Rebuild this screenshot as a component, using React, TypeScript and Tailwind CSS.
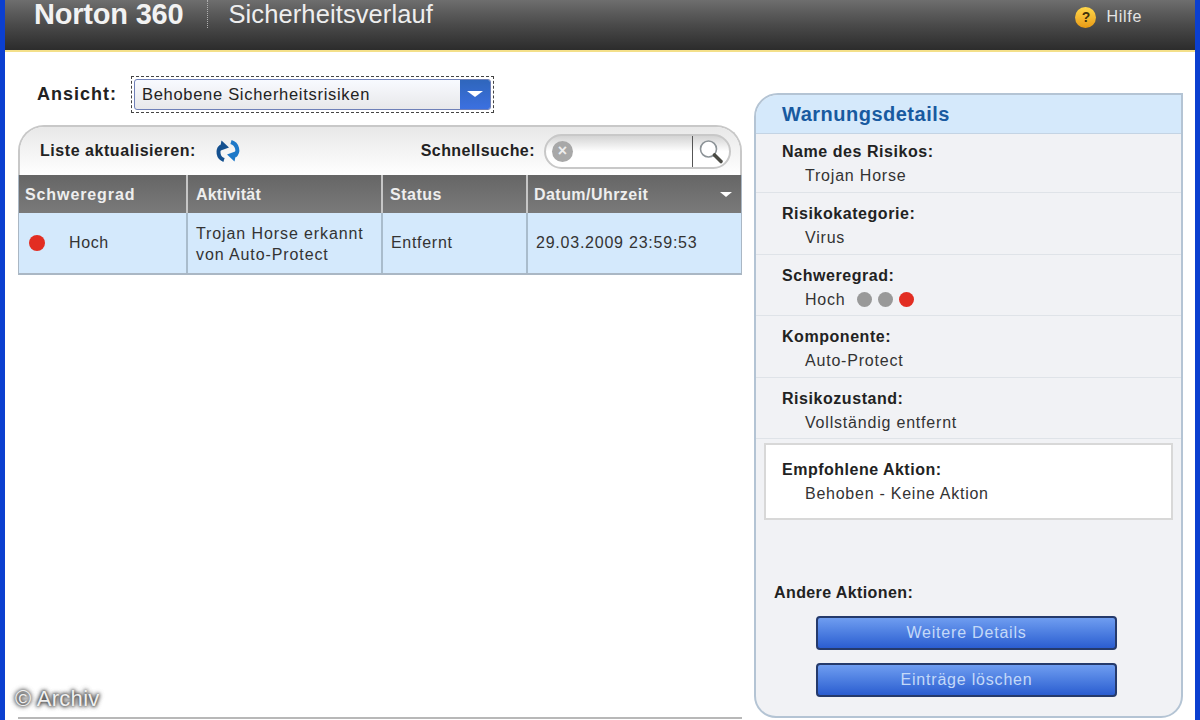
const font = "font-['Liberation_Sans',Arial,sans-serif]";

function RefreshIcon() {
  return (
    <svg width="26" height="22" viewBox="0 0 26 22" fill="none" className="ml-[19px]">
      <path d="M9 20 C3 18 1.5 10 6.5 6" stroke="#14508f" strokeWidth="4" fill="none" />
      <path d="M6.5 0.5 L14 7.5 L4.5 11 Z" fill="#14508f" />
      <path d="M16 2 C22.5 4 24.5 12 19.5 16" stroke="#1d78c8" strokeWidth="4" fill="none" />
      <path d="M19.5 21.5 L12 14.5 L21.5 11 Z" fill="#1d78c8" />
    </svg>
  );
}

function SearchIcon() {
  return (
    <svg width="30" height="28" viewBox="0 0 30 28" fill="none">
      <circle cx="12.5" cy="12" r="8" stroke="#8d9498" strokeWidth="1.6" fill="#fff" />
      <path d="M18.5 18 L25 24.5" stroke="#4a4a44" strokeWidth="3.6" strokeLinecap="round" />
    </svg>
  );
}

function Detail({ label, value, first, children }: { label: string; value: string; first?: boolean; children?: React.ReactNode }) {
  return (
    <div className={first ? "h-[59px] shrink-0 border-b border-[#dfe3e8] pl-[26px] pt-[6px]" : "h-[61.5px] shrink-0 border-b border-[#dfe3e8] pl-[26px] pt-[9px]"}>
      <div className="text-[16px] leading-[23px] font-bold tracking-[0.55px] text-[#222]">{label}</div>
      <div className="flex items-center pl-[23px] text-[16px] leading-[25px] text-[#333] tracking-[0.8px]">
        {value}
        {children}
      </div>
    </div>
  );
}

function ActionButton({ text }: { text: string }) {
  return (
    <div className="flex h-[34px] w-[301px] items-center justify-center rounded-[4px] border-2 border-[#253a6b] bg-gradient-to-b from-[#6f9df0] to-[#2b5dd0] text-[16px] tracking-[0.8px] text-[#c4d9f8]">
      {text}
    </div>
  );
}

export default function App() {
  return (
    <div className={`${font} relative flex h-[720px] w-[1200px] flex-col overflow-hidden border-x-[5px] border-x-[#0b3fd0] bg-white`}>
      <header className="flex h-[52px] shrink-0 items-start justify-between border-b-2 border-b-[#f4e08a] bg-gradient-to-b from-[#6e6e6e] via-[#4a4a4a] to-[#2c2c2c] pl-[29px] pr-[53px]">
        <div className="flex items-center">
          <span className="text-[29px] leading-[27px] font-bold tracking-[-0.2px] text-[#f2f2f2]">Norton 360</span>
          <span className="ml-[24px] h-[28px] border-l border-dotted border-l-[#b0b0b0]" />
          <span className="ml-[20px] text-[25.5px] leading-[27px] tracking-[0.1px] text-[#eeeeee]">Sicherheitsverlauf</span>
        </div>
        <div className="mt-[6px] flex items-center gap-[10px]">
          <span className="flex h-[21px] w-[21px] items-center justify-center rounded-full bg-gradient-to-b from-[#ffd84a] to-[#e89a10] text-[14px] leading-none font-bold text-[#40300a]">?</span>
          <span className="text-[16px] leading-[22px] tracking-[0.7px] text-[#e4e4e4]">Hilfe</span>
        </div>
      </header>

      <main className="flex min-h-0 flex-1 pl-[13px]">
        <section className="flex w-[724px] shrink-0 flex-col">
          <div className="flex h-[73px] shrink-0 items-center pl-[19px] pt-[11px]">
            <span className="w-[94px] text-[18px] font-bold tracking-[1px] text-[#222]">Ansicht:</span>
            <div className="h-[37px] w-[363px] border border-dashed border-[#444] p-[2px]">
              <div className="flex h-full items-stretch rounded-[3px] border border-[#6f80b8] bg-gradient-to-b from-[#f8faff] to-[#e8e8ea]">
                <span className="flex flex-1 items-center pl-[7px] text-[16.5px] tracking-[0.7px] text-[#222]">Behobene Sicherheitsrisiken</span>
                <span className="flex w-[30px] items-center justify-center rounded-r-[2px] bg-gradient-to-b from-[#2f66bc] to-[#3c70e0]">
                  <span className="h-0 w-0 border-x-[8px] border-t-[6px] border-x-transparent border-t-white" />
                </span>
              </div>
            </div>
          </div>

          <div className="flex shrink-0 flex-col overflow-hidden rounded-t-[26px] border-x-2 border-t-2 border-[#c8c8c8] border-b-0">
            <div className="flex h-[48px] items-center bg-gradient-to-b from-[#e8e8e8] to-white pl-[20px] pr-[9px]">
              <span className="text-[16px] font-bold tracking-[0.55px] text-[#222]">Liste aktualisieren:</span>
              <RefreshIcon />
              <span className="ml-auto text-[16px] font-bold tracking-[0.45px] text-[#222]">Schnellsuche:</span>
              <div className="ml-[9px] flex h-[35px] w-[187px] items-stretch rounded-full border-2 border-[#c8c8c8] bg-gradient-to-b from-[#d4d4d4] via-white to-white">
                <span className="ml-[6px] mt-[5px] flex h-[21px] w-[21px] items-center justify-center rounded-full bg-[#a8a8a8] text-[16px] leading-none font-bold text-[#eee]">×</span>
                <div className="ml-auto flex w-[37px] items-center justify-center border-l border-l-[#555]">
                  <SearchIcon />
                </div>
              </div>
            </div>
          </div>
          <div className="grid shrink-0 grid-cols-[169px_195px_145px_213px] border-x border-b-2 border-[#aab7c4]">
            <div className="flex h-[38px] items-center border-r-2 border-r-[#c6c6c6] bg-gradient-to-b from-[#666] to-[#7a7a7a] pl-[6px] pt-[1px] text-[16px] font-bold tracking-[0.9px] text-[#eee]">Schweregrad</div>
            <div className="flex h-[38px] items-center border-r-2 border-r-[#c6c6c6] bg-gradient-to-b from-[#666] to-[#7a7a7a] pl-[8px] pt-[1px] text-[16px] font-bold tracking-[0.2px] text-[#eee]">Aktivität</div>
            <div className="flex h-[38px] items-center border-r-2 border-r-[#c6c6c6] bg-gradient-to-b from-[#666] to-[#7a7a7a] pl-[7px] pt-[1px] text-[16px] font-bold tracking-[0.5px] text-[#eee]">Status</div>
            <div className="flex h-[38px] items-center justify-between bg-gradient-to-b from-[#666] to-[#7a7a7a] pl-[6px] pr-[9px] pt-[1px] text-[16px] font-bold tracking-[0.45px] text-[#eee]">
              Datum/Uhrzeit
              <span className="h-0 w-0 border-x-[6px] border-t-[5px] border-x-transparent border-t-white" />
            </div>
            <div className="flex h-[60px] items-center border-r-2 border-r-[#a9bccc] bg-[#d4e9fc] pl-[10px] text-[16px] tracking-[0.6px] text-[#333]">
              <span className="h-[16px] w-[16px] rounded-full bg-[#e22d22]" />
              <span className="ml-[24px]">Hoch</span>
            </div>
            <div className="flex h-[60px] items-center border-r-2 border-r-[#a9bccc] bg-[#d4e9fc] pl-[8px] pt-[2px] text-[16px] leading-[21.5px] tracking-[0.9px] text-[#333]">
              <span>Trojan Horse erkannt<br />von Auto-Protect</span>
            </div>
            <div className="flex h-[60px] items-center border-r-2 border-r-[#a9bccc] bg-[#d4e9fc] pl-[8px] text-[16px] tracking-[0.7px] text-[#333]">Entfernt</div>
            <div className="flex h-[60px] items-center bg-[#d4e9fc] pl-[8px] text-[16px] tracking-[0.77px] text-[#333]">29.03.2009 23:59:53</div>
          </div>
          <div className="mb-[1px] mt-auto border-b-2 border-b-[#b8b8b8]" />
        </section>

        <aside className="mb-[2px] ml-[12px] mt-[41px] flex w-[429px] shrink-0 flex-col overflow-hidden rounded-tl-[24px] rounded-b-[22px] border-2 border-[#b4c4d4] bg-[#f1f2f5]">
          <div className="flex h-[39px] shrink-0 items-center border-b border-b-[#c4d4e4] bg-[#d5e9fb] pl-[26px] text-[20px] font-bold tracking-[0.5px] text-[#185aa0]">Warnungsdetails</div>
          <Detail first label="Name des Risikos:" value="Trojan Horse" />
          <Detail label="Risikokategorie:" value="Virus" />
          <Detail label="Schweregrad:" value="Hoch">
            <span className="ml-[11px] h-[15px] w-[15px] rounded-full bg-[#999]" />
            <span className="ml-[6px] h-[15px] w-[15px] rounded-full bg-[#999]" />
            <span className="ml-[6px] h-[15px] w-[15px] rounded-full bg-[#e22d22]" />
          </Detail>
          <Detail label="Komponente:" value="Auto-Protect" />
          <Detail label="Risikozustand:" value="Vollständig entfernt" />
          <div className="ml-[8px] mt-[4px] h-[77px] w-[409px] shrink-0 border-2 border-[#d8d8d8] bg-white pl-[16px] pt-[13px]">
            <div className="text-[16px] leading-[24px] font-bold tracking-[0.5px] text-[#222]">Empfohlene Aktion:</div>
            <div className="pl-[23px] text-[16px] leading-[24px] tracking-[0.75px] text-[#333]">Behoben - Keine Aktion</div>
          </div>
          <div className="ml-[18px] mt-[61px] text-[16px] leading-[24px] font-bold tracking-[0.4px] text-[#222]">Andere Aktionen:</div>
          <div className="ml-[60px] mt-[11px] flex flex-col gap-[13px]">
            <ActionButton text="Weitere Details" />
            <ActionButton text="Einträge löschen" />
          </div>
        </aside>
      </main>

      <div className="absolute bottom-[8px] left-[10px] text-[22px] leading-[26px] tracking-[0.3px] text-[#f0f0f0] [text-shadow:0_0_5px_#444,0_0_5px_#444,0_0_3px_#444]">© Archiv</div>
    </div>
  );
}
